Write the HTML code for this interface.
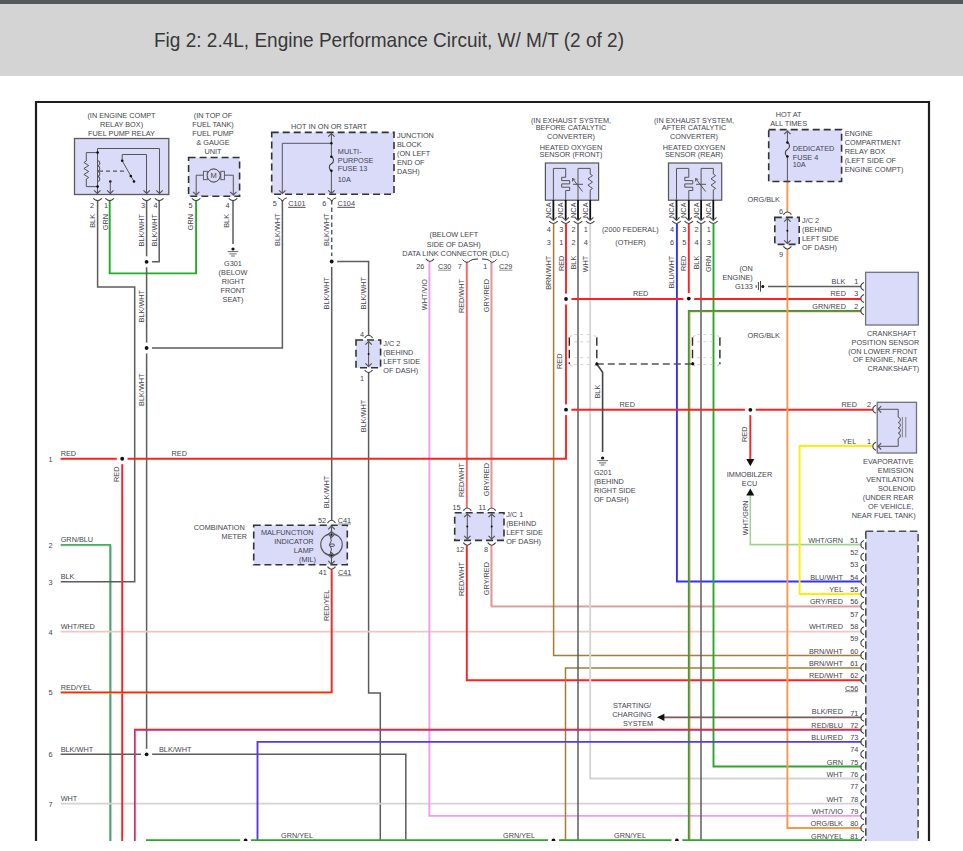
<!DOCTYPE html>
<html><head><meta charset="utf-8"><title>Fig 2</title>
<style>
html,body{margin:0;padding:0;background:#fff;}
body{width:963px;height:851px;position:relative;overflow:hidden;font-family:"Liberation Sans",sans-serif;}
#bar{position:absolute;left:0;top:0;width:963px;height:4px;background:#55585a;}
#hdr{position:absolute;left:0;top:4px;width:963px;height:72px;background:#d4d4d4;}
svg{position:absolute;left:0;top:0;}
text{font-family:"Liberation Sans",sans-serif;}
</style></head><body>
<div id="bar"></div><div id="hdr"></div>
<svg width="963" height="851" viewBox="0 0 963 851">
<text x="154" y="47" font-size="21" fill="#383838" textLength="470" lengthAdjust="spacingAndGlyphs">Fig 2: 2.4L, Engine Performance Circuit, W/ M/T (2 of 2)</text>
<defs><clipPath id="cp"><rect x="0" y="80" width="963" height="761"/></clipPath></defs>
<g clip-path="url(#cp)">
<line x1="36" y1="101" x2="36" y2="841" stroke="#1e1e1e" stroke-width="2.2"/>
<line x1="35" y1="102" x2="930" y2="102" stroke="#1e1e1e" stroke-width="2.2"/>
<line x1="929" y1="101" x2="929" y2="841" stroke="#1e1e1e" stroke-width="2.2"/>
<polyline points="60.7,544.9 110.2,544.9 110.2,841" fill="none" stroke="#4cb04c" stroke-width="1.9"/>
<line x1="60.7" y1="545.8" x2="110.2" y2="545.8" stroke="#7a9ad8" stroke-width="0.6"/>
<line x1="111" y1="545.5" x2="111" y2="841" stroke="#5a86d0" stroke-width="0.7"/>
<polyline points="97.6,200 97.6,287 134.7,287 134.7,581.8 60.7,581.8" fill="none" stroke="#5c5c5c" stroke-width="1.5"/>
<polyline points="109.7,200 109.7,273.4 196.1,273.4 196.1,200" fill="none" stroke="#26aa26" stroke-width="1.9"/>
<line x1="146.6" y1="200" x2="146.6" y2="754.3" stroke="#5c5c5c" stroke-width="1.5"/>
<polyline points="159.2,200 159.2,261.8 146.6,261.8" fill="none" stroke="#5c5c5c" stroke-width="1.5"/>
<line x1="233" y1="200" x2="233" y2="244" stroke="#5c5c5c" stroke-width="1.5"/>
<polyline points="282.4,200 282.4,348 146.6,348" fill="none" stroke="#5c5c5c" stroke-width="1.5"/>
<line x1="331.7" y1="200" x2="331.7" y2="261.5" stroke="#5c5c5c" stroke-width="1.5" stroke-dasharray="4.5 3"/>
<line x1="331.7" y1="261.5" x2="331.7" y2="520.2" stroke="#5c5c5c" stroke-width="1.5"/>
<polyline points="331.7,261.5 368.6,261.5 368.6,335.2" fill="none" stroke="#5c5c5c" stroke-width="1.5"/>
<polyline points="368.6,372.6 368.6,693 380.3,693 380.3,841" fill="none" stroke="#5c5c5c" stroke-width="1.5"/>
<line x1="60.7" y1="631.6" x2="861.5" y2="631.6" stroke="#f3c6c6" stroke-width="1.9"/>
<line x1="60.7" y1="803.6" x2="861.5" y2="803.6" stroke="#d4d4d4" stroke-width="1.9"/>
<polyline points="60.7,754.3 405.8,754.3 405.8,841" fill="none" stroke="#5c5c5c" stroke-width="1.5"/>
<polyline points="429.4,262 429.4,815.9 861.5,815.9" fill="none" stroke="#ef9cef" stroke-width="1.9"/>
<polyline points="466.8,262 466.8,508" fill="none" stroke="#ff6262" stroke-width="1.9"/>
<polyline points="466.8,545.2 466.8,680.2 861.5,680.2" fill="none" stroke="#ff2020" stroke-width="1.9"/>
<polyline points="491.7,262 491.7,508" fill="none" stroke="#f78e8e" stroke-width="1.6"/>
<line x1="490.6" y1="262" x2="490.6" y2="508" stroke="#a8acb4" stroke-width="0.6"/>
<polyline points="491.7,545.2 491.7,606.3 861.5,606.3" fill="none" stroke="#f78e8e" stroke-width="1.6"/>
<line x1="490.6" y1="545.2" x2="490.6" y2="606.3" stroke="#a8acb4" stroke-width="0.6"/>
<line x1="491" y1="607.1" x2="861.5" y2="607.1" stroke="#c8a8a8" stroke-width="0.7"/>
<polyline points="553.6,223.5 553.6,655.6 861.5,655.6" fill="none" stroke="#a47c34" stroke-width="1.5"/>
<polyline points="565.5,841 565.5,668 861.5,668" fill="none" stroke="#a47c34" stroke-width="1.5"/>
<line x1="578" y1="223.5" x2="578" y2="841" stroke="#5c5c5c" stroke-width="1.5"/>
<polyline points="590.2,223.5 590.2,778.5 861.5,778.5" fill="none" stroke="#d4d4d4" stroke-width="1.9"/>
<polyline points="676.9,223.5 676.9,581.5 861.5,581.5" fill="none" stroke="#3030ff" stroke-width="1.9"/>
<line x1="701" y1="223.5" x2="701" y2="841" stroke="#5c5c5c" stroke-width="1.5"/>
<polyline points="713.5,223.5 713.5,766.5 861.5,766.5" fill="none" stroke="#26aa26" stroke-width="1.9"/>
<polyline points="688.8,841 688.8,311 861,311" fill="none" stroke="#26aa26" stroke-width="1.9"/>
<line x1="689.95" y1="841" x2="689.95" y2="311.8" stroke="#ff5a4a" stroke-width="0.8"/>
<line x1="689.6" y1="311.8" x2="861" y2="311.8" stroke="#e86048" stroke-width="0.7"/>
<line x1="688.8" y1="223.5" x2="688.8" y2="298.6" stroke="#ff2020" stroke-width="1.9"/>
<polyline points="566,223.5 566,458.75 60.6,458.75" fill="none" stroke="#ff2020" stroke-width="1.9"/>
<line x1="122.2" y1="458.75" x2="122.2" y2="841" stroke="#ff2020" stroke-width="1.9"/>
<line x1="566" y1="299" x2="861" y2="299" stroke="#ff2020" stroke-width="1.9"/>
<line x1="768" y1="286.4" x2="861" y2="286.4" stroke="#5c5c5c" stroke-width="1.5"/>
<line x1="566" y1="409.8" x2="873" y2="409.8" stroke="#ff2020" stroke-width="1.9"/>
<line x1="750.3" y1="409.8" x2="750.3" y2="460" stroke="#ff2020" stroke-width="1.9"/>
<polyline points="750.3,494 750.3,544.6 861.5,544.6" fill="none" stroke="#a0d494" stroke-width="1.6"/>
<polyline points="787.4,181.5 787.4,212" fill="none" stroke="#f29a48" stroke-width="1.9"/>
<polyline points="787.4,249 787.4,828 861.5,828" fill="none" stroke="#f29a48" stroke-width="1.9"/>
<polyline points="873,446 799.6,446 799.6,594 861.5,594" fill="none" stroke="#ffee00" stroke-width="1.9"/>
<polyline points="60.7,692.4 331.7,692.4 331.7,569.3" fill="none" stroke="#ff2020" stroke-width="1.9"/>
<line x1="60.7" y1="693.5" x2="331" y2="693.5" stroke="#f0b020" stroke-width="0.6"/>
<polyline points="134.7,841 134.7,729.5 861.5,729.5" fill="none" stroke="#ff2020" stroke-width="1.5"/>
<line x1="135.6" y1="841" x2="135.6" y2="730.2" stroke="#6060ff" stroke-width="0.6"/>
<line x1="135.6" y1="730.6" x2="861.5" y2="730.6" stroke="#8a3cc8" stroke-width="0.8"/>
<polyline points="257.5,841 257.5,741.9 861.5,741.9" fill="none" stroke="#5a3ae0" stroke-width="1.9"/>
<line x1="664" y1="717.3" x2="861.5" y2="717.3" stroke="#5c5c5c" stroke-width="1.5"/>
<line x1="664" y1="718.1" x2="861.5" y2="718.1" stroke="#e06060" stroke-width="0.5"/>
<line x1="146" y1="840.3" x2="861.5" y2="840.3" stroke="#26aa26" stroke-width="1.9"/>
<line x1="596.8" y1="364" x2="692.8" y2="364" stroke="#555" stroke-width="1.7" stroke-dasharray="7 4"/>
<polyline points="596.8,364 602.6,372.3 602.6,452" fill="none" stroke="#444" stroke-width="1.6"/>
<rect x="74.5" y="138.5" width="94.3" height="56" fill="#dadaf9" stroke="#5a5a5a" stroke-width="1.3"/>
<polyline points="97.5,193.5 97.5,148.5 159.5,148.5 159.5,193.5" fill="none" stroke="#555" stroke-width="1.0"/>
<polyline points="97.6,152.6 86.3,152.6 86.3,161" fill="none" stroke="#555" stroke-width="1.0"/>
<path d="M86.3,161 l-2.4,1.5 l4.8,3 l-4.8,3 l4.8,3 l-4.8,3 l4.8,3 l-2.4,1.5 L86.3,186.6 L97.6,186.6" fill="none" stroke="#555" stroke-width="1.0"/>
<path d="M97.6,160.5 a2.7,2.7 0 0 1 0,5.3 a2.7,2.7 0 0 1 0,5.3 a2.7,2.7 0 0 1 0,5.3 a2.7,2.7 0 0 1 0,5.3" fill="none" stroke="#555" stroke-width="1.1"/>
<line x1="99" y1="171.2" x2="126.5" y2="171.2" stroke="#555" stroke-width="1.3" stroke-dasharray="4 3"/>
<polyline points="122.2,160.8 122.2,154.5 146.5,154.5 146.5,193.5" fill="none" stroke="#555" stroke-width="1.0"/>
<line x1="122.2" y1="160.8" x2="134" y2="181.5" stroke="#555" stroke-width="1.0"/>
<circle cx="97.6" cy="152.6" r="1.3" fill="#111"/>
<circle cx="97.6" cy="186.6" r="1.3" fill="#111"/>
<circle cx="122.2" cy="160.8" r="1.3" fill="#111"/>
<circle cx="130.8" cy="176.1" r="1.3" fill="#111"/>
<circle cx="134" cy="181.5" r="1.3" fill="#111"/>
<circle cx="110.3" cy="181.5" r="1.3" fill="#111"/>
<line x1="110.3" y1="181.5" x2="110.3" y2="193.5" stroke="#555" stroke-width="1.0"/>
<polyline points="94.1,190.3 97.3,193.5 100.5,190.3" fill="none" stroke="#555" stroke-width="1.15"/>
<polyline points="107.1,190.3 110.3,193.5 113.5,190.3" fill="none" stroke="#555" stroke-width="1.15"/>
<polyline points="143.5,190.3 146.7,193.5 149.9,190.3" fill="none" stroke="#555" stroke-width="1.15"/>
<polyline points="156.3,190.3 159.5,193.5 162.7,190.3" fill="none" stroke="#555" stroke-width="1.15"/>
<path d="M93.3,198.3 C95.23,200.4 96.31,200.6 97.6,200.6 C98.89,200.6 99.96,200.4 101.9,198.3" fill="none" stroke="#444" stroke-width="1.1"/>
<path d="M105.4,198.3 C107.34,200.4 108.41,200.6 109.7,200.6 C110.99,200.6 112.06,200.4 114,198.3" fill="none" stroke="#444" stroke-width="1.1"/>
<path d="M142.3,198.3 C144.23,200.4 145.31,200.6 146.6,200.6 C147.89,200.6 148.97,200.4 150.9,198.3" fill="none" stroke="#444" stroke-width="1.1"/>
<path d="M154.9,198.3 C156.83,200.4 157.91,200.6 159.2,200.6 C160.49,200.6 161.56,200.4 163.5,198.3" fill="none" stroke="#444" stroke-width="1.1"/>
<text x="121.5" y="118" font-size="7.3" text-anchor="middle" fill="#454550">(IN ENGINE COMPT</text>
<text x="121.5" y="126.9" font-size="7.3" text-anchor="middle" fill="#454550">RELAY BOX)</text>
<text x="121.5" y="135.8" font-size="7.3" text-anchor="middle" fill="#454550">FUEL PUMP RELAY</text>
<text x="94" y="208" font-size="7.3" text-anchor="end" fill="#454550">2</text>
<text x="108" y="208" font-size="7.3" text-anchor="end" fill="#454550">1</text>
<text x="145" y="208" font-size="7.3" text-anchor="end" fill="#454550">3</text>
<text x="157.5" y="208" font-size="7.3" text-anchor="end" fill="#454550">4</text>
<text transform="translate(95.3,214) rotate(-90)" font-size="7.3" text-anchor="end" fill="#454550">BLK</text>
<text transform="translate(107.5,214) rotate(-90)" font-size="7.3" text-anchor="end" fill="#454550">GRN</text>
<text transform="translate(144.3,214) rotate(-90)" font-size="7.3" text-anchor="end" fill="#454550">BLK/WHT</text>
<text transform="translate(156.8,214) rotate(-90)" font-size="7.3" text-anchor="end" fill="#454550">BLK/WHT</text>
<rect x="188.6" y="157.5" width="51" height="38.7" fill="#dadaf9" stroke="#333" stroke-width="1.6" stroke-dasharray="7 4"/>
<circle cx="213.7" cy="175.5" r="6.5" fill="#dadaf9" stroke="#555" stroke-width="1"/>
<rect x="203.4" y="171.3" width="3.9" height="8.4" fill="#dadaf9" stroke="#555" stroke-width="0.9"/>
<rect x="220.8" y="171.3" width="3.6" height="8.4" fill="#dadaf9" stroke="#555" stroke-width="0.9"/>
<circle cx="213.7" cy="175.5" r="6.5" fill="#dadaf9" stroke="#555" stroke-width="1"/>
<text x="213.7" y="178.2" font-size="7.5" text-anchor="middle" fill="#454550">M</text>
<polyline points="203.4,175.2 196.2,175.2 196.2,195" fill="none" stroke="#555" stroke-width="1.0"/>
<polyline points="224.4,175.2 233.3,175.2 233.3,195" fill="none" stroke="#555" stroke-width="1.0"/>
<polyline points="193,191.8 196.2,195 199.4,191.8" fill="none" stroke="#555" stroke-width="1.15"/>
<polyline points="230.1,191.8 233.3,195 236.5,191.8" fill="none" stroke="#555" stroke-width="1.15"/>
<path d="M191.8,198.3 C193.73,200.4 194.81,200.6 196.1,200.6 C197.39,200.6 198.47,200.4 200.4,198.3" fill="none" stroke="#444" stroke-width="1.1"/>
<path d="M228.7,198.3 C230.63,200.4 231.71,200.6 233,200.6 C234.29,200.6 235.37,200.4 237.3,198.3" fill="none" stroke="#444" stroke-width="1.1"/>
<text x="213" y="117.5" font-size="7.3" text-anchor="middle" fill="#454550">(IN TOP OF</text>
<text x="213" y="126.5" font-size="7.3" text-anchor="middle" fill="#454550">FUEL TANK)</text>
<text x="213" y="135.5" font-size="7.3" text-anchor="middle" fill="#454550">FUEL PUMP</text>
<text x="213" y="144.5" font-size="7.3" text-anchor="middle" fill="#454550">&amp; GAUGE</text>
<text x="213" y="153.5" font-size="7.3" text-anchor="middle" fill="#454550">UNIT</text>
<text x="192.5" y="208" font-size="7.3" text-anchor="end" fill="#454550">5</text>
<text x="229.5" y="208" font-size="7.3" text-anchor="end" fill="#454550">4</text>
<text transform="translate(192.5,214) rotate(-90)" font-size="7.3" text-anchor="end" fill="#454550">GRN</text>
<text transform="translate(229,214) rotate(-90)" font-size="7.3" text-anchor="end" fill="#454550">BLK</text>
<circle cx="233" cy="249" r="1.6" fill="#111"/>
<line x1="227.7" y1="251.6" x2="238.3" y2="251.6" stroke="#666" stroke-width="1.0"/>
<line x1="229.4" y1="253.9" x2="236.6" y2="253.9" stroke="#666" stroke-width="1.0"/>
<line x1="231.2" y1="256" x2="234.8" y2="256" stroke="#666" stroke-width="1.0"/>
<text x="233" y="266" font-size="7.3" text-anchor="middle" fill="#454550">G301</text>
<text x="233" y="274.9" font-size="7.3" text-anchor="middle" fill="#454550">(BELOW</text>
<text x="233" y="283.8" font-size="7.3" text-anchor="middle" fill="#454550">RIGHT</text>
<text x="233" y="292.7" font-size="7.3" text-anchor="middle" fill="#454550">FRONT</text>
<text x="233" y="301.6" font-size="7.3" text-anchor="middle" fill="#454550">SEAT)</text>
<rect x="271.7" y="132.4" width="122.3" height="61.8" fill="#dadaf9" stroke="#333" stroke-width="1.6" stroke-dasharray="7 4"/>
<line x1="331.4" y1="133" x2="331.4" y2="194" stroke="#555" stroke-width="1.0"/>
<polyline points="328.2,136.7 331.4,133.5 334.6,136.7" fill="none" stroke="#555" stroke-width="1.15"/>
<polyline points="328.2,190.3 331.4,193.5 334.6,190.3" fill="none" stroke="#555" stroke-width="1.15"/>
<polyline points="331.4,143.3 282.3,143.3 282.3,193.5" fill="none" stroke="#555" stroke-width="1.0"/>
<polyline points="279.1,190.3 282.3,193.5 285.5,190.3" fill="none" stroke="#555" stroke-width="1.15"/>
<rect x="329" y="157.5" width="5" height="12.6" fill="#dadaf9"/>
<path d="M331.4,156.8 c2.8,1.2 2.8,5.8 0,7 c-2.8,1.2 -2.8,5.8 0,7" fill="none" stroke="#444" stroke-width="1.1"/>
<circle cx="331.4" cy="143.3" r="1.2" fill="#111"/>
<circle cx="331.4" cy="156.8" r="1.3" fill="#111"/>
<circle cx="331.4" cy="170.8" r="1.3" fill="#111"/>
<text x="329" y="128.6" font-size="7.3" text-anchor="middle" fill="#454550">HOT IN ON OR START</text>
<text x="337.8" y="154" font-size="7.3" fill="#454550">MULTI-</text>
<text x="337.8" y="162.7" font-size="7.3" fill="#454550">PURPOSE</text>
<text x="337.8" y="171.4" font-size="7.3" fill="#454550">FUSE 13</text>
<text x="337.8" y="181.6" font-size="7.3" fill="#454550">10A</text>
<text x="397" y="137.8" font-size="7.3" fill="#454550">JUNCTION</text>
<text x="397" y="146.8" font-size="7.3" fill="#454550">BLOCK</text>
<text x="397" y="155.8" font-size="7.3" fill="#454550">(ON LEFT</text>
<text x="397" y="164.8" font-size="7.3" fill="#454550">END OF</text>
<text x="397" y="173.8" font-size="7.3" fill="#454550">DASH)</text>
<path d="M277.9,197.8 Q281.4,198.5 282.4,201.5 Q283.4,198.5 286.9,197.8" fill="none" stroke="#444" stroke-width="1.0"/>
<path d="M327.2,197.8 Q330.7,198.5 331.7,201.5 Q332.7,198.5 336.2,197.8" fill="none" stroke="#444" stroke-width="1.0"/>
<text x="276.8" y="206" font-size="7.3" text-anchor="end" fill="#454550">5</text>
<text x="326.3" y="206" font-size="7.3" text-anchor="end" fill="#454550">6</text>
<text x="288.2" y="206" font-size="7.3" fill="#454550" text-decoration="underline">C101</text>
<text x="337.5" y="206" font-size="7.3" fill="#454550" text-decoration="underline">C104</text>
<line x1="288.2" y1="207.2" x2="305.2" y2="207.2" stroke="#666" stroke-width="0.7"/>
<line x1="337.5" y1="207.2" x2="354.6" y2="207.2" stroke="#666" stroke-width="0.7"/>
<text transform="translate(279.5,213.5) rotate(-90)" font-size="7.3" text-anchor="end" fill="#454550">BLK/WHT</text>
<text transform="translate(328.8,213.5) rotate(-90)" font-size="7.3" text-anchor="end" fill="#454550">BLK/WHT</text>
<text transform="translate(329,277) rotate(-90)" font-size="7.3" text-anchor="end" fill="#454550">BLK/WHT</text>
<text transform="translate(366,277) rotate(-90)" font-size="7.3" text-anchor="end" fill="#454550">BLK/WHT</text>
<text transform="translate(144.3,290) rotate(-90)" font-size="7.3" text-anchor="end" fill="#454550">BLK/WHT</text>
<text transform="translate(144.3,373.5) rotate(-90)" font-size="7.3" text-anchor="end" fill="#454550">BLK/WHT</text>
<text transform="translate(366,399.7) rotate(-90)" font-size="7.3" text-anchor="end" fill="#454550">BLK/WHT</text>
<text transform="translate(329,475.7) rotate(-90)" font-size="7.3" text-anchor="end" fill="#454550">BLK/WHT</text>
<rect x="356" y="340" width="24.6" height="27.8" fill="#dadaf9" stroke="#333" stroke-width="1.6" stroke-dasharray="7 4"/>
<line x1="368.6" y1="341" x2="368.6" y2="367" stroke="#555" stroke-width="1.0"/>
<polyline points="365.4,344.7 368.6,341.5 371.8,344.7" fill="none" stroke="#555" stroke-width="1.15"/>
<polyline points="365.4,363.3 368.6,366.5 371.8,363.3" fill="none" stroke="#555" stroke-width="1.15"/>
<circle cx="368.6" cy="354" r="1.0" fill="#111"/>
<path d="M364.6,337.8 C366.4,335.4 367.4,335.2 368.6,335.2 C369.8,335.2 370.8,335.4 372.6,337.8" fill="none" stroke="#444" stroke-width="1.1"/>
<path d="M364.6,370 C366.4,372.4 367.4,372.6 368.6,372.6 C369.8,372.6 370.8,372.4 372.6,370" fill="none" stroke="#444" stroke-width="1.1"/>
<text x="364" y="336.5" font-size="7.3" text-anchor="end" fill="#454550">4</text>
<text x="364" y="380.5" font-size="7.3" text-anchor="end" fill="#454550">1</text>
<text x="383.3" y="346.2" font-size="7.3" fill="#454550">J/C 2</text>
<text x="383.3" y="355.2" font-size="7.3" fill="#454550">(BEHIND</text>
<text x="383.3" y="364.2" font-size="7.3" fill="#454550">LEFT SIDE</text>
<text x="383.3" y="373.2" font-size="7.3" fill="#454550">OF DASH)</text>
<text x="453.8" y="236.8" font-size="7.3" text-anchor="middle" fill="#454550">(BELOW LEFT</text>
<text x="453.8" y="246.8" font-size="7.3" text-anchor="middle" fill="#454550">SIDE OF DASH)</text>
<text x="509" y="255.5" font-size="7.3" text-anchor="end" fill="#454550">DATA LINK CONNECTOR (DLC)</text>
<path d="M426,258.9 C427.8,261.3 428.8,261.5 430,261.5 C431.2,261.5 432.2,261.3 434,258.9" fill="none" stroke="#444" stroke-width="1.1"/>
<path d="M462.5,259.5 Q466.7,264.5 470.5,260.5 Q472,259 478,259" fill="none" stroke="#333" stroke-width="1.0"/>
<path d="M482,259 Q488,259 489.5,260.5 Q492.2,264.5 496.5,259.5" fill="none" stroke="#333" stroke-width="1.0"/>
<text x="424.3" y="269" font-size="7.3" text-anchor="end" fill="#454550">26</text>
<text x="461.7" y="269" font-size="7.3" text-anchor="end" fill="#454550">7</text>
<text x="487.3" y="269" font-size="7.3" text-anchor="end" fill="#454550">1</text>
<text x="438" y="269" font-size="7.3" fill="#454550">C30</text>
<text x="499" y="269" font-size="7.3" fill="#454550">C29</text>
<line x1="438" y1="270.2" x2="451" y2="270.2" stroke="#666" stroke-width="0.7"/>
<line x1="499" y1="270.2" x2="512.4" y2="270.2" stroke="#666" stroke-width="0.7"/>
<text transform="translate(426.5,279) rotate(-90)" font-size="7.3" text-anchor="end" fill="#454550">WHT/VIO</text>
<text transform="translate(464,279) rotate(-90)" font-size="7.3" text-anchor="end" fill="#454550">RED/WHT</text>
<text transform="translate(489,279) rotate(-90)" font-size="7.3" text-anchor="end" fill="#454550">GRY/RED</text>
<text transform="translate(464,463) rotate(-90)" font-size="7.3" text-anchor="end" fill="#454550">RED/WHT</text>
<text transform="translate(489,463) rotate(-90)" font-size="7.3" text-anchor="end" fill="#454550">GRY/RED</text>
<rect x="454.7" y="512.7" width="49.3" height="27.7" fill="#dadaf9" stroke="#333" stroke-width="1.6" stroke-dasharray="7 4"/>
<line x1="467.3" y1="513.5" x2="467.3" y2="539.5" stroke="#555" stroke-width="1.0"/>
<polyline points="464.1,517.2 467.3,514 470.5,517.2" fill="none" stroke="#555" stroke-width="1.15"/>
<polyline points="464.1,535.8 467.3,539 470.5,535.8" fill="none" stroke="#555" stroke-width="1.15"/>
<circle cx="467.3" cy="526.5" r="1.0" fill="#111"/>
<path d="M463.3,510.6 C465.1,508.2 466.1,508 467.3,508 C468.5,508 469.5,508.2 471.3,510.6" fill="none" stroke="#444" stroke-width="1.1"/>
<path d="M463.3,542.6 C465.1,545 466.1,545.2 467.3,545.2 C468.5,545.2 469.5,545 471.3,542.6" fill="none" stroke="#444" stroke-width="1.1"/>
<line x1="491.7" y1="513.5" x2="491.7" y2="539.5" stroke="#555" stroke-width="1.0"/>
<polyline points="488.5,517.2 491.7,514 494.9,517.2" fill="none" stroke="#555" stroke-width="1.15"/>
<polyline points="488.5,535.8 491.7,539 494.9,535.8" fill="none" stroke="#555" stroke-width="1.15"/>
<circle cx="491.7" cy="526.5" r="1.0" fill="#111"/>
<path d="M487.7,510.6 C489.5,508.2 490.5,508 491.7,508 C492.9,508 493.9,508.2 495.7,510.6" fill="none" stroke="#444" stroke-width="1.1"/>
<path d="M487.7,542.6 C489.5,545 490.5,545.2 491.7,545.2 C492.9,545.2 493.9,545 495.7,542.6" fill="none" stroke="#444" stroke-width="1.1"/>
<text x="460.7" y="509.5" font-size="7.3" text-anchor="end" fill="#454550">15</text>
<text x="486" y="509.5" font-size="7.3" text-anchor="end" fill="#454550">11</text>
<text x="464" y="551.5" font-size="7.3" text-anchor="end" fill="#454550">12</text>
<text x="488" y="551.5" font-size="7.3" text-anchor="end" fill="#454550">8</text>
<text x="506.2" y="517.3" font-size="7.3" fill="#454550">J/C 1</text>
<text x="506.2" y="526.3" font-size="7.3" fill="#454550">(BEHIND</text>
<text x="506.2" y="535.3" font-size="7.3" fill="#454550">LEFT SIDE</text>
<text x="506.2" y="544.3" font-size="7.3" fill="#454550">OF DASH)</text>
<text transform="translate(464,562) rotate(-90)" font-size="7.3" text-anchor="end" fill="#454550">RED/WHT</text>
<text transform="translate(489,562) rotate(-90)" font-size="7.3" text-anchor="end" fill="#454550">GRY/RED</text>
<rect x="253.7" y="525.2" width="93.6" height="39.5" fill="#dadaf9" stroke="#333" stroke-width="1.6" stroke-dasharray="7 4"/>
<circle cx="331.5" cy="544.6" r="10.8" fill="none" stroke="#555" stroke-width="1.1"/>
<line x1="331.5" y1="525.8" x2="331.5" y2="535" stroke="#555" stroke-width="1.1"/>
<line x1="331.5" y1="555" x2="331.5" y2="564.5" stroke="#555" stroke-width="1.1"/>
<polyline points="328.2,529.3 331.5,526 334.8,529.3" fill="none" stroke="#555" stroke-width="1.15"/>
<polyline points="328.2,560.9 331.5,564.2 334.8,560.9" fill="none" stroke="#555" stroke-width="1.15"/>
<polyline points="326.5,535.6 331.5,531.4 336.5,535.6" fill="none" stroke="#555" stroke-width="1.1"/>
<polyline points="326.5,553.6 331.5,557.8 336.5,553.6" fill="none" stroke="#555" stroke-width="1.1"/>
<polyline points="328.9,534.9 331.5,537.5 334.1,534.9" fill="none" stroke="#555" stroke-width="1.15"/>
<polyline points="328.9,555.1 331.5,552.5 334.1,555.1" fill="none" stroke="#555" stroke-width="1.15"/>
<circle cx="331.5" cy="535" r="1.1" fill="#111"/>
<circle cx="331.5" cy="555.2" r="1.1" fill="#111"/>
<path d="M331.5,535 q-1.8,2 -0.6,4 q1.2,2 -0.8,4 q-1.2,2 0.4,4 q1.8,2 0.4,4 q-1.2,2 0.6,4" fill="none" stroke="#555" stroke-width="1.0"/>
<ellipse cx="332" cy="545.2" rx="2.6" ry="1.3" fill="none" stroke="#555" stroke-width="1"/>
<path d="M327.5,522.8 C329.3,520.4 330.3,520.2 331.5,520.2 C332.7,520.2 333.7,520.4 335.5,522.8" fill="none" stroke="#444" stroke-width="1.1"/>
<path d="M327.5,566.7 C329.3,569.1 330.3,569.3 331.5,569.3 C332.7,569.3 333.7,569.1 335.5,566.7" fill="none" stroke="#444" stroke-width="1.1"/>
<text x="313.6" y="534.6" font-size="7.3" text-anchor="end" fill="#454550">MALFUNCTION</text>
<text x="313.6" y="543.6" font-size="7.3" text-anchor="end" fill="#454550">INDICATOR</text>
<text x="313.6" y="552.6" font-size="7.3" text-anchor="end" fill="#454550">LAMP</text>
<text x="316" y="561.5" font-size="7.3" text-anchor="end" fill="#454550">(MIL)</text>
<text x="244.8" y="530" font-size="7.3" text-anchor="end" fill="#454550">COMBINATION</text>
<text x="247.1" y="539" font-size="7.3" text-anchor="end" fill="#454550">METER</text>
<text x="326" y="522.8" font-size="7.3" text-anchor="end" fill="#454550">52</text>
<text x="337.7" y="522.8" font-size="7.3" fill="#454550">C41</text>
<line x1="337.7" y1="524" x2="351" y2="524" stroke="#666" stroke-width="0.7"/>
<text x="326.8" y="574.5" font-size="7.3" text-anchor="end" fill="#454550">41</text>
<text x="338" y="574.5" font-size="7.3" fill="#454550">C41</text>
<line x1="338" y1="575.7" x2="351.3" y2="575.7" stroke="#666" stroke-width="0.7"/>
<text transform="translate(329,589.7) rotate(-90)" font-size="7.3" text-anchor="end" fill="#454550">RED/YEL</text>
<rect x="545.4" y="163" width="53.2" height="37.2" fill="#dadaf9" stroke="#555" stroke-width="1.2"/>
<polyline points="553.4,200 553.4,168.4 565.7,168.4 565.7,177.3" fill="none" stroke="#555" stroke-width="1.0"/>
<path d="M565.7,177.3 h-4 v3.3 h8 v3.3 h-8 v3.3 h8 v3.3 h-4 V200" fill="none" stroke="#555" stroke-width="1.0"/>
<polyline points="578,200 578,168.4 590.2,168.4 590.2,174" fill="none" stroke="#555" stroke-width="1.0"/>
<path d="M590.2,174 l2.3,1.6 l-4.6,3.2 l4.6,3.2 l-4.6,3.2 l4.6,3.2 l-2.3,1.6 V200" fill="none" stroke="#555" stroke-width="1.0"/>
<line x1="573" y1="184.3" x2="583" y2="184.3" stroke="#555" stroke-width="1.0"/>
<line x1="572.5" y1="178.5" x2="582.5" y2="191.5" stroke="#555" stroke-width="1.0"/>
<polyline points="572.5,181.5 572.5,178.5 575.2,179.5" fill="none" stroke="#555" stroke-width="0.9"/>
<line x1="553.4" y1="200" x2="553.4" y2="220" stroke="#111" stroke-width="1.8"/>
<polyline points="550.2,217.3 553.4,220.5 556.6,217.3" fill="none" stroke="#555" stroke-width="1.15"/>
<path d="M549.1,221.2 C551.03,223.3 552.11,223.5 553.4,223.5 C554.69,223.5 555.76,223.3 557.7,221.2" fill="none" stroke="#444" stroke-width="1.1"/>
<text transform="translate(550.9,202.5) rotate(-90)" font-size="7.3" text-anchor="end" fill="#454550">NCA</text>
<text x="550.9" y="231.5" font-size="7.3" text-anchor="end" fill="#454550">4</text>
<text x="550.9" y="244.9" font-size="7.3" text-anchor="end" fill="#454550">3</text>
<line x1="565.7" y1="200" x2="565.7" y2="220" stroke="#111" stroke-width="1.8"/>
<polyline points="562.5,217.3 565.7,220.5 568.9,217.3" fill="none" stroke="#555" stroke-width="1.15"/>
<path d="M561.4,221.2 C563.33,223.3 564.41,223.5 565.7,223.5 C566.99,223.5 568.06,223.3 570,221.2" fill="none" stroke="#444" stroke-width="1.1"/>
<text transform="translate(563.2,202.5) rotate(-90)" font-size="7.3" text-anchor="end" fill="#454550">NCA</text>
<text x="563.2" y="231.5" font-size="7.3" text-anchor="end" fill="#454550">3</text>
<text x="563.2" y="244.9" font-size="7.3" text-anchor="end" fill="#454550">1</text>
<line x1="578" y1="200" x2="578" y2="220" stroke="#111" stroke-width="1.8"/>
<polyline points="574.8,217.3 578,220.5 581.2,217.3" fill="none" stroke="#555" stroke-width="1.15"/>
<path d="M573.7,221.2 C575.63,223.3 576.71,223.5 578,223.5 C579.29,223.5 580.37,223.3 582.3,221.2" fill="none" stroke="#444" stroke-width="1.1"/>
<text transform="translate(575.5,202.5) rotate(-90)" font-size="7.3" text-anchor="end" fill="#454550">NCA</text>
<text x="575.5" y="231.5" font-size="7.3" text-anchor="end" fill="#454550">2</text>
<text x="575.5" y="244.9" font-size="7.3" text-anchor="end" fill="#454550">2</text>
<line x1="590.2" y1="200" x2="590.2" y2="220" stroke="#111" stroke-width="1.8"/>
<polyline points="587,217.3 590.2,220.5 593.4,217.3" fill="none" stroke="#555" stroke-width="1.15"/>
<path d="M585.9,221.2 C587.83,223.3 588.91,223.5 590.2,223.5 C591.49,223.5 592.56,223.3 594.5,221.2" fill="none" stroke="#444" stroke-width="1.1"/>
<text transform="translate(587.7,202.5) rotate(-90)" font-size="7.3" text-anchor="end" fill="#454550">NCA</text>
<text x="587.7" y="231.5" font-size="7.3" text-anchor="end" fill="#454550">1</text>
<text x="587.7" y="244.9" font-size="7.3" text-anchor="end" fill="#454550">4</text>
<rect x="668.5" y="163" width="53.2" height="37.2" fill="#dadaf9" stroke="#555" stroke-width="1.2"/>
<polyline points="676.5,200 676.5,168.4 688.8,168.4 688.8,177.3" fill="none" stroke="#555" stroke-width="1.0"/>
<path d="M688.8,177.3 h-4 v3.3 h8 v3.3 h-8 v3.3 h8 v3.3 h-4 V200" fill="none" stroke="#555" stroke-width="1.0"/>
<polyline points="701.1,200 701.1,168.4 713.3,168.4 713.3,174" fill="none" stroke="#555" stroke-width="1.0"/>
<path d="M713.3,174 l2.3,1.6 l-4.6,3.2 l4.6,3.2 l-4.6,3.2 l4.6,3.2 l-2.3,1.6 V200" fill="none" stroke="#555" stroke-width="1.0"/>
<line x1="696.1" y1="184.3" x2="706.1" y2="184.3" stroke="#555" stroke-width="1.0"/>
<line x1="695.6" y1="178.5" x2="705.6" y2="191.5" stroke="#555" stroke-width="1.0"/>
<polyline points="695.6,181.5 695.6,178.5 698.3,179.5" fill="none" stroke="#555" stroke-width="0.9"/>
<line x1="676.5" y1="200" x2="676.5" y2="220" stroke="#111" stroke-width="1.8"/>
<polyline points="673.3,217.3 676.5,220.5 679.7,217.3" fill="none" stroke="#555" stroke-width="1.15"/>
<path d="M672.2,221.2 C674.13,223.3 675.21,223.5 676.5,223.5 C677.79,223.5 678.87,223.3 680.8,221.2" fill="none" stroke="#444" stroke-width="1.1"/>
<text transform="translate(674,202.5) rotate(-90)" font-size="7.3" text-anchor="end" fill="#454550">NCA</text>
<text x="674" y="231.5" font-size="7.3" text-anchor="end" fill="#454550">4</text>
<text x="674" y="244.9" font-size="7.3" text-anchor="end" fill="#454550">6</text>
<line x1="688.8" y1="200" x2="688.8" y2="220" stroke="#111" stroke-width="1.8"/>
<polyline points="685.6,217.3 688.8,220.5 692,217.3" fill="none" stroke="#555" stroke-width="1.15"/>
<path d="M684.5,221.2 C686.43,223.3 687.51,223.5 688.8,223.5 C690.09,223.5 691.16,223.3 693.1,221.2" fill="none" stroke="#444" stroke-width="1.1"/>
<text transform="translate(686.3,202.5) rotate(-90)" font-size="7.3" text-anchor="end" fill="#454550">NCA</text>
<text x="686.3" y="231.5" font-size="7.3" text-anchor="end" fill="#454550">3</text>
<text x="686.3" y="244.9" font-size="7.3" text-anchor="end" fill="#454550">5</text>
<line x1="701.1" y1="200" x2="701.1" y2="220" stroke="#111" stroke-width="1.8"/>
<polyline points="697.9,217.3 701.1,220.5 704.3,217.3" fill="none" stroke="#555" stroke-width="1.15"/>
<path d="M696.8,221.2 C698.74,223.3 699.81,223.5 701.1,223.5 C702.39,223.5 703.47,223.3 705.4,221.2" fill="none" stroke="#444" stroke-width="1.1"/>
<text transform="translate(698.6,202.5) rotate(-90)" font-size="7.3" text-anchor="end" fill="#454550">NCA</text>
<text x="698.6" y="231.5" font-size="7.3" text-anchor="end" fill="#454550">2</text>
<text x="698.6" y="244.9" font-size="7.3" text-anchor="end" fill="#454550">4</text>
<line x1="713.3" y1="200" x2="713.3" y2="220" stroke="#111" stroke-width="1.8"/>
<polyline points="710.1,217.3 713.3,220.5 716.5,217.3" fill="none" stroke="#555" stroke-width="1.15"/>
<path d="M709,221.2 C710.93,223.3 712.01,223.5 713.3,223.5 C714.59,223.5 715.66,223.3 717.6,221.2" fill="none" stroke="#444" stroke-width="1.1"/>
<text transform="translate(710.8,202.5) rotate(-90)" font-size="7.3" text-anchor="end" fill="#454550">NCA</text>
<text x="710.8" y="231.5" font-size="7.3" text-anchor="end" fill="#454550">1</text>
<text x="710.8" y="244.9" font-size="7.3" text-anchor="end" fill="#454550">3</text>
<text x="571" y="123" font-size="7.3" text-anchor="middle" fill="#454550">(IN EXHAUST SYSTEM,</text>
<text x="571" y="130" font-size="7.3" text-anchor="middle" fill="#454550">BEFORE CATALYTIC</text>
<text x="571" y="138.8" font-size="7.3" text-anchor="middle" fill="#454550">CONVERTER)</text>
<text x="571" y="150.2" font-size="7.3" text-anchor="middle" fill="#454550">HEATED OXYGEN</text>
<text x="571" y="157.2" font-size="7.3" text-anchor="middle" fill="#454550">SENSOR (FRONT)</text>
<text x="694" y="123" font-size="7.3" text-anchor="middle" fill="#454550">(IN EXHAUST SYSTEM,</text>
<text x="694" y="130" font-size="7.3" text-anchor="middle" fill="#454550">AFTER CATALYTIC</text>
<text x="694" y="138.8" font-size="7.3" text-anchor="middle" fill="#454550">CONVERTER)</text>
<text x="694" y="150.2" font-size="7.3" text-anchor="middle" fill="#454550">HEATED OXYGEN</text>
<text x="694" y="157.2" font-size="7.3" text-anchor="middle" fill="#454550">SENSOR (REAR)</text>
<text x="630.3" y="232" font-size="7.3" text-anchor="middle" fill="#454550">(2000 FEDERAL)</text>
<text x="630.5" y="244.9" font-size="7.3" text-anchor="middle" fill="#454550">(OTHER)</text>
<text transform="translate(551,255.7) rotate(-90)" font-size="7.3" text-anchor="end" fill="#454550">BRN/WHT</text>
<text transform="translate(563.5,255.7) rotate(-90)" font-size="7.3" text-anchor="end" fill="#454550">RED</text>
<text transform="translate(575.5,255.7) rotate(-90)" font-size="7.3" text-anchor="end" fill="#454550">BLK</text>
<text transform="translate(587.7,255.7) rotate(-90)" font-size="7.3" text-anchor="end" fill="#454550">WHT</text>
<text transform="translate(674.4,255.7) rotate(-90)" font-size="7.3" text-anchor="end" fill="#454550">BLU/WHT</text>
<text transform="translate(686.3,255.7) rotate(-90)" font-size="7.3" text-anchor="end" fill="#454550">RED</text>
<text transform="translate(698.5,255.7) rotate(-90)" font-size="7.3" text-anchor="end" fill="#454550">BLK</text>
<text transform="translate(711,255.7) rotate(-90)" font-size="7.3" text-anchor="end" fill="#454550">GRN</text>
<text transform="translate(561.5,353.6) rotate(-90)" font-size="7.3" text-anchor="end" fill="#454550">RED</text>
<text transform="translate(599.5,384.7) rotate(-90)" font-size="7.3" text-anchor="end" fill="#454550">BLK</text>
<text x="640.7" y="296.2" font-size="7.3" text-anchor="middle" fill="#454550">RED</text>
<text x="627.3" y="407.2" font-size="7.3" text-anchor="middle" fill="#454550">RED</text>
<line x1="573.8" y1="334.6" x2="592.3" y2="334.6" stroke="#cfcfcf" stroke-width="0.9" stroke-dasharray="3 3.5"/>
<line x1="573.8" y1="341.8" x2="592.3" y2="341.8" stroke="#cfcfcf" stroke-width="0.9" stroke-dasharray="3 3.5"/>
<line x1="573.8" y1="357.7" x2="592.3" y2="357.7" stroke="#cfcfcf" stroke-width="0.9" stroke-dasharray="3 3.5"/>
<line x1="573.8" y1="364.6" x2="592.3" y2="364.6" stroke="#cfcfcf" stroke-width="0.9" stroke-dasharray="3 3.5"/>
<line x1="569.3" y1="337.2" x2="569.3" y2="364.3" stroke="#2a2a2a" stroke-width="1.4" stroke-dasharray="8.5 4"/>
<line x1="596.8" y1="337.2" x2="596.8" y2="364.3" stroke="#2a2a2a" stroke-width="1.4" stroke-dasharray="8.5 4"/>
<path d="M569.6,337.7 q0.5,-1.8 2.5,-2.2" fill="none" stroke="#bbb" stroke-width="0.9"/>
<path d="M596.5,337.7 q-0.5,-1.8 -2.5,-2.2" fill="none" stroke="#bbb" stroke-width="0.9"/>
<path d="M569.6,363.8 q0.5,1.8 2.5,2.2" fill="none" stroke="#bbb" stroke-width="0.9"/>
<path d="M596.5,363.8 q-0.5,1.8 -2.5,2.2" fill="none" stroke="#bbb" stroke-width="0.9"/>
<line x1="697" y1="334.6" x2="715.4" y2="334.6" stroke="#cfcfcf" stroke-width="0.9" stroke-dasharray="3 3.5"/>
<line x1="697" y1="341.8" x2="715.4" y2="341.8" stroke="#cfcfcf" stroke-width="0.9" stroke-dasharray="3 3.5"/>
<line x1="697" y1="357.7" x2="715.4" y2="357.7" stroke="#cfcfcf" stroke-width="0.9" stroke-dasharray="3 3.5"/>
<line x1="697" y1="364.6" x2="715.4" y2="364.6" stroke="#cfcfcf" stroke-width="0.9" stroke-dasharray="3 3.5"/>
<line x1="692.5" y1="337.2" x2="692.5" y2="364.3" stroke="#2a2a2a" stroke-width="1.4" stroke-dasharray="8.5 4"/>
<line x1="719.9" y1="337.2" x2="719.9" y2="364.3" stroke="#2a2a2a" stroke-width="1.4" stroke-dasharray="8.5 4"/>
<path d="M692.8,337.7 q0.5,-1.8 2.5,-2.2" fill="none" stroke="#bbb" stroke-width="0.9"/>
<path d="M719.6,337.7 q-0.5,-1.8 -2.5,-2.2" fill="none" stroke="#bbb" stroke-width="0.9"/>
<path d="M692.8,363.8 q0.5,1.8 2.5,2.2" fill="none" stroke="#bbb" stroke-width="0.9"/>
<path d="M719.6,363.8 q-0.5,1.8 -2.5,2.2" fill="none" stroke="#bbb" stroke-width="0.9"/>
<circle cx="596.8" cy="364" r="1.6" fill="#111"/>
<circle cx="692.8" cy="363.8" r="1.6" fill="#111"/>
<circle cx="602.6" cy="458" r="1.6" fill="#111"/>
<line x1="597.3" y1="460.6" x2="607.9" y2="460.6" stroke="#666" stroke-width="1.0"/>
<line x1="599" y1="462.9" x2="606.2" y2="462.9" stroke="#666" stroke-width="1.0"/>
<line x1="600.8" y1="465" x2="604.4" y2="465" stroke="#666" stroke-width="1.0"/>
<text x="593.9" y="475" font-size="7.3" fill="#454550">G201</text>
<text x="593.9" y="483.9" font-size="7.3" fill="#454550">(BEHIND</text>
<text x="593.9" y="492.8" font-size="7.3" fill="#454550">RIGHT SIDE</text>
<text x="593.9" y="501.7" font-size="7.3" fill="#454550">OF DASH)</text>
<rect x="768.7" y="129.6" width="72.9" height="51.9" fill="#dadaf9" stroke="#333" stroke-width="1.6" stroke-dasharray="7 4"/>
<line x1="787.4" y1="130.5" x2="787.4" y2="181.5" stroke="#555" stroke-width="1.0"/>
<polyline points="784.2,134.2 787.4,131 790.6,134.2" fill="none" stroke="#555" stroke-width="1.15"/>
<rect x="785" y="143.2" width="5" height="12.6" fill="#dadaf9"/>
<path d="M787.4,142.5 c2.8,1.2 2.8,5.8 0,7 c-2.8,1.2 -2.8,5.8 0,7" fill="none" stroke="#444" stroke-width="1.1"/>
<circle cx="787.4" cy="142.5" r="1.3" fill="#111"/>
<circle cx="787.4" cy="156.5" r="1.3" fill="#111"/>
<text x="788.6" y="116.8" font-size="7.3" text-anchor="middle" fill="#454550">HOT AT</text>
<text x="788.6" y="125.8" font-size="7.3" text-anchor="middle" fill="#454550">ALL TIMES</text>
<text x="792.7" y="151.2" font-size="7.3" fill="#454550">DEDICATED</text>
<text x="792.7" y="160.1" font-size="7.3" fill="#454550">FUSE 4</text>
<text x="792.7" y="166.9" font-size="7.3" fill="#454550">10A</text>
<text x="844.7" y="136.2" font-size="7.3" fill="#454550">ENGINE</text>
<text x="844.7" y="145.25" font-size="7.3" fill="#454550">COMPARTMENT</text>
<text x="844.7" y="154.3" font-size="7.3" fill="#454550">RELAY BOX</text>
<text x="844.7" y="163.35" font-size="7.3" fill="#454550">(LEFT SIDE OF</text>
<text x="844.7" y="172.4" font-size="7.3" fill="#454550">ENGINE COMPT)</text>
<text x="780" y="201.8" font-size="7.3" text-anchor="end" fill="#454550">ORG/BLK</text>
<text x="780" y="337.9" font-size="7.3" text-anchor="end" fill="#454550">ORG/BLK</text>
<rect x="774.8" y="217.4" width="24.4" height="27" fill="#dadaf9" stroke="#333" stroke-width="1.6" stroke-dasharray="7 4"/>
<line x1="787.4" y1="218" x2="787.4" y2="244" stroke="#555" stroke-width="1.0"/>
<polyline points="784.2,221.7 787.4,218.5 790.6,221.7" fill="none" stroke="#555" stroke-width="1.15"/>
<polyline points="784.2,240.3 787.4,243.5 790.6,240.3" fill="none" stroke="#555" stroke-width="1.15"/>
<circle cx="787.4" cy="230.7" r="1.0" fill="#111"/>
<path d="M783.4,214.6 C785.2,212.2 786.2,212 787.4,212 C788.6,212 789.6,212.2 791.4,214.6" fill="none" stroke="#444" stroke-width="1.1"/>
<path d="M783.4,246.4 C785.2,248.8 786.2,249 787.4,249 C788.6,249 789.6,248.8 791.4,246.4" fill="none" stroke="#444" stroke-width="1.1"/>
<text x="783" y="213.5" font-size="7.3" text-anchor="end" fill="#454550">6</text>
<text x="783" y="256.8" font-size="7.3" text-anchor="end" fill="#454550">9</text>
<text x="802" y="223" font-size="7.3" fill="#454550">J/C 2</text>
<text x="802" y="232.1" font-size="7.3" fill="#454550">(BEHIND</text>
<text x="802" y="241.2" font-size="7.3" fill="#454550">LEFT SIDE</text>
<text x="802" y="250.3" font-size="7.3" fill="#454550">OF DASH)</text>
<text x="752.8" y="271" font-size="7.3" text-anchor="end" fill="#454550">(ON</text>
<text x="752.8" y="279.6" font-size="7.3" text-anchor="end" fill="#454550">ENGINE)</text>
<text x="752.8" y="289.3" font-size="7.3" text-anchor="end" fill="#454550">G133</text>
<line x1="756.2" y1="285.2" x2="756.2" y2="287.8" stroke="#444" stroke-width="1.1"/>
<line x1="758.4" y1="282" x2="758.4" y2="290" stroke="#444" stroke-width="1.0"/>
<line x1="760.5" y1="281" x2="760.5" y2="291.6" stroke="#444" stroke-width="1.0"/>
<circle cx="762.8" cy="286.4" r="1.5" fill="#111"/>
<rect x="865.6" y="272.3" width="52.7" height="52.7" fill="#dadaf9" stroke="#707080" stroke-width="1.3"/>
<path d="M864,282.4 Q860.4,284.2 861,286.4 Q860.4,288.6 864,290.4" fill="none" stroke="#444" stroke-width="1.1"/>
<path d="M864,294.6 Q860.4,296.4 861,298.6 Q860.4,300.8 864,302.6" fill="none" stroke="#444" stroke-width="1.1"/>
<path d="M864,306.8 Q860.4,308.6 861,310.8 Q860.4,313 864,314.8" fill="none" stroke="#444" stroke-width="1.1"/>
<text x="845.4" y="284" font-size="7.3" text-anchor="end" fill="#454550">BLK</text>
<text x="858.3" y="284" font-size="7.3" text-anchor="end" fill="#454550">1</text>
<text x="846" y="296.2" font-size="7.3" text-anchor="end" fill="#454550">RED</text>
<text x="858.3" y="296.2" font-size="7.3" text-anchor="end" fill="#454550">3</text>
<text x="846" y="308.5" font-size="7.3" text-anchor="end" fill="#454550">GRN/RED</text>
<text x="858.3" y="308.5" font-size="7.3" text-anchor="end" fill="#454550">2</text>
<text x="916.5" y="336.2" font-size="7.3" text-anchor="end" fill="#454550">CRANKSHAFT</text>
<text x="919.3" y="344.9" font-size="7.3" text-anchor="end" fill="#454550">POSITION SENSOR</text>
<text x="917.5" y="353.6" font-size="7.3" text-anchor="end" fill="#454550">(ON LOWER FRONT</text>
<text x="917.5" y="362.3" font-size="7.3" text-anchor="end" fill="#454550">OF ENGINE, NEAR</text>
<text x="919.3" y="371" font-size="7.3" text-anchor="end" fill="#454550">CRANKSHAFT)</text>
<rect x="877.2" y="402.3" width="39.3" height="50.7" fill="#dadaf9" stroke="#707080" stroke-width="1.3"/>
<path d="M876,405.3 Q872.4,407.1 873,409.3 Q872.4,411.5 876,413.3" fill="none" stroke="#444" stroke-width="1.1"/>
<path d="M876,442.3 Q872.4,444.1 873,446.3 Q872.4,448.5 876,450.3" fill="none" stroke="#444" stroke-width="1.1"/>
<polyline points="877.8,409.3 898.2,409.3 898.2,417.2" fill="none" stroke="#555" stroke-width="1.0"/>
<path d="M898.2,417.2 a2.7,2.7 0 0 1 0,5.3 a2.7,2.7 0 0 1 0,5.3 a2.7,2.7 0 0 1 0,5.3 a2.7,2.7 0 0 1 0,5.3" fill="none" stroke="#555" stroke-width="1.0"/>
<polyline points="898.2,438.5 898.2,446.3 877.8,446.3" fill="none" stroke="#555" stroke-width="1.0"/>
<polyline points="881.2,406.1 878,409.3 881.2,412.5" fill="none" stroke="#555" stroke-width="1.15"/>
<polyline points="881.2,443.1 878,446.3 881.2,449.5" fill="none" stroke="#555" stroke-width="1.15"/>
<line x1="902.4" y1="417" x2="902.4" y2="437.4" stroke="#777" stroke-width="0.9"/>
<line x1="905.8" y1="417" x2="905.8" y2="437.4" stroke="#777" stroke-width="0.9"/>
<text x="857" y="406.7" font-size="7.3" text-anchor="end" fill="#454550">RED</text>
<text x="871" y="406.7" font-size="7.3" text-anchor="end" fill="#454550">2</text>
<text x="856.3" y="443.8" font-size="7.3" text-anchor="end" fill="#454550">YEL</text>
<text x="871" y="443.5" font-size="7.3" text-anchor="end" fill="#454550">1</text>
<text x="913.5" y="464" font-size="7.3" text-anchor="end" fill="#454550">EVAPORATIVE</text>
<text x="913.5" y="472.95" font-size="7.3" text-anchor="end" fill="#454550">EMISSION</text>
<text x="913.5" y="481.9" font-size="7.3" text-anchor="end" fill="#454550">VENTILATION</text>
<text x="915.6" y="490.85" font-size="7.3" text-anchor="end" fill="#454550">SOLENOID</text>
<text x="913.5" y="499.8" font-size="7.3" text-anchor="end" fill="#454550">(UNDER REAR</text>
<text x="913.5" y="508.75" font-size="7.3" text-anchor="end" fill="#454550">OF VEHICLE,</text>
<text x="915.6" y="517.7" font-size="7.3" text-anchor="end" fill="#454550">NEAR FUEL TANK)</text>
<path d="M746.3,459 L754.3,459 L750.3,466.3 Z" fill="#111"/>
<path d="M746.3,495.6 L754.3,495.6 L750.3,488.5 Z" fill="#111"/>
<text x="749.5" y="476.6" font-size="7.3" text-anchor="middle" fill="#454550">IMMOBILZER</text>
<text x="749.5" y="485.9" font-size="7.3" text-anchor="middle" fill="#454550">ECU</text>
<text transform="translate(747,426.6) rotate(-90)" font-size="7.3" text-anchor="end" fill="#454550">RED</text>
<text transform="translate(747.6,500.5) rotate(-90)" font-size="7.3" text-anchor="end" fill="#454550">WHT/GRN</text>
<path d="M664.4,713.7 L664.4,721 L657,717.3 Z" fill="#111"/>
<text x="632" y="708" font-size="7.3" text-anchor="middle" fill="#454550">STARTING/</text>
<text x="632" y="717" font-size="7.3" text-anchor="middle" fill="#454550">CHARGING</text>
<text x="653" y="726" font-size="7.3" text-anchor="end" fill="#454550">SYSTEM</text>
<rect x="865.8" y="531.2" width="52.3" height="320" fill="#dadaf9" stroke="#505050" stroke-width="1.6" stroke-dasharray="7.5 3.5"/>
<path d="M864,540.6 Q860.4,542.4 861,544.6 Q860.4,546.8 864,548.6" fill="none" stroke="#444" stroke-width="1.1"/>
<text x="858.3" y="542.8" font-size="7.3" text-anchor="end" fill="#454550">51</text>
<text x="843" y="542.8" font-size="7.3" text-anchor="end" fill="#454550">WHT/GRN</text>
<path d="M864,552.9 Q860.4,554.7 861,556.9 Q860.4,559.1 864,560.9" fill="none" stroke="#444" stroke-width="1.1"/>
<text x="858.3" y="555.1" font-size="7.3" text-anchor="end" fill="#454550">52</text>
<path d="M864,565.2 Q860.4,567 861,569.2 Q860.4,571.4 864,573.2" fill="none" stroke="#444" stroke-width="1.1"/>
<text x="858.3" y="567.4" font-size="7.3" text-anchor="end" fill="#454550">53</text>
<path d="M864,577.5 Q860.4,579.3 861,581.5 Q860.4,583.7 864,585.5" fill="none" stroke="#444" stroke-width="1.1"/>
<text x="858.3" y="579.7" font-size="7.3" text-anchor="end" fill="#454550">54</text>
<text x="843" y="579.7" font-size="7.3" text-anchor="end" fill="#454550">BLU/WHT</text>
<path d="M864,589.8 Q860.4,591.6 861,593.8 Q860.4,596 864,597.8" fill="none" stroke="#444" stroke-width="1.1"/>
<text x="858.3" y="592" font-size="7.3" text-anchor="end" fill="#454550">55</text>
<text x="843" y="592" font-size="7.3" text-anchor="end" fill="#454550">YEL</text>
<path d="M864,602.1 Q860.4,603.9 861,606.1 Q860.4,608.3 864,610.1" fill="none" stroke="#444" stroke-width="1.1"/>
<text x="858.3" y="604.3" font-size="7.3" text-anchor="end" fill="#454550">56</text>
<text x="843" y="604.3" font-size="7.3" text-anchor="end" fill="#454550">GRY/RED</text>
<path d="M864,614.4 Q860.4,616.2 861,618.4 Q860.4,620.6 864,622.4" fill="none" stroke="#444" stroke-width="1.1"/>
<text x="858.3" y="616.6" font-size="7.3" text-anchor="end" fill="#454550">57</text>
<path d="M864,626.7 Q860.4,628.5 861,630.7 Q860.4,632.9 864,634.7" fill="none" stroke="#444" stroke-width="1.1"/>
<text x="858.3" y="628.9" font-size="7.3" text-anchor="end" fill="#454550">58</text>
<text x="843" y="628.9" font-size="7.3" text-anchor="end" fill="#454550">WHT/RED</text>
<path d="M864,639 Q860.4,640.8 861,643 Q860.4,645.2 864,647" fill="none" stroke="#444" stroke-width="1.1"/>
<text x="858.3" y="641.2" font-size="7.3" text-anchor="end" fill="#454550">59</text>
<path d="M864,651.3 Q860.4,653.1 861,655.3 Q860.4,657.5 864,659.3" fill="none" stroke="#444" stroke-width="1.1"/>
<text x="858.3" y="653.5" font-size="7.3" text-anchor="end" fill="#454550">60</text>
<text x="843" y="653.5" font-size="7.3" text-anchor="end" fill="#454550">BRN/WHT</text>
<path d="M864,663.6 Q860.4,665.4 861,667.6 Q860.4,669.8 864,671.6" fill="none" stroke="#444" stroke-width="1.1"/>
<text x="858.3" y="665.8" font-size="7.3" text-anchor="end" fill="#454550">61</text>
<text x="843" y="665.8" font-size="7.3" text-anchor="end" fill="#454550">BRN/WHT</text>
<path d="M864,675.9 Q860.4,677.7 861,679.9 Q860.4,682.1 864,683.9" fill="none" stroke="#444" stroke-width="1.1"/>
<text x="858.3" y="678.1" font-size="7.3" text-anchor="end" fill="#454550">62</text>
<text x="843" y="678.1" font-size="7.3" text-anchor="end" fill="#454550">RED/WHT</text>
<text x="858.3" y="690.5" font-size="7.3" text-anchor="end" fill="#454550">C56</text>
<line x1="845" y1="691.7" x2="858.3" y2="691.7" stroke="#666" stroke-width="0.7"/>
<path d="M864,713.3 Q860.4,715.1 861,717.3 Q860.4,719.5 864,721.3" fill="none" stroke="#444" stroke-width="1.1"/>
<text x="858.3" y="715.5" font-size="7.3" text-anchor="end" fill="#454550">71</text>
<text x="843" y="713.8" font-size="7.3" text-anchor="end" fill="#454550">BLK/RED</text>
<path d="M864,725.61 Q860.4,727.41 861,729.61 Q860.4,731.81 864,733.61" fill="none" stroke="#444" stroke-width="1.1"/>
<text x="858.3" y="727.81" font-size="7.3" text-anchor="end" fill="#454550">72</text>
<text x="843" y="727.81" font-size="7.3" text-anchor="end" fill="#454550">RED/BLU</text>
<path d="M864,737.92 Q860.4,739.72 861,741.92 Q860.4,744.12 864,745.92" fill="none" stroke="#444" stroke-width="1.1"/>
<text x="858.3" y="740.12" font-size="7.3" text-anchor="end" fill="#454550">73</text>
<text x="843" y="740.12" font-size="7.3" text-anchor="end" fill="#454550">BLU/RED</text>
<path d="M864,750.23 Q860.4,752.03 861,754.23 Q860.4,756.43 864,758.23" fill="none" stroke="#444" stroke-width="1.1"/>
<text x="858.3" y="752.43" font-size="7.3" text-anchor="end" fill="#454550">74</text>
<path d="M864,762.54 Q860.4,764.34 861,766.54 Q860.4,768.74 864,770.54" fill="none" stroke="#444" stroke-width="1.1"/>
<text x="858.3" y="764.74" font-size="7.3" text-anchor="end" fill="#454550">75</text>
<text x="843" y="764.74" font-size="7.3" text-anchor="end" fill="#454550">GRN</text>
<path d="M864,774.85 Q860.4,776.65 861,778.85 Q860.4,781.05 864,782.85" fill="none" stroke="#444" stroke-width="1.1"/>
<text x="858.3" y="777.05" font-size="7.3" text-anchor="end" fill="#454550">76</text>
<text x="843" y="777.05" font-size="7.3" text-anchor="end" fill="#454550">WHT</text>
<path d="M864,787.16 Q860.4,788.96 861,791.16 Q860.4,793.36 864,795.16" fill="none" stroke="#444" stroke-width="1.1"/>
<text x="858.3" y="789.36" font-size="7.3" text-anchor="end" fill="#454550">77</text>
<path d="M864,799.47 Q860.4,801.27 861,803.47 Q860.4,805.67 864,807.47" fill="none" stroke="#444" stroke-width="1.1"/>
<text x="858.3" y="801.67" font-size="7.3" text-anchor="end" fill="#454550">78</text>
<text x="843" y="801.67" font-size="7.3" text-anchor="end" fill="#454550">WHT</text>
<path d="M864,811.78 Q860.4,813.58 861,815.78 Q860.4,817.98 864,819.78" fill="none" stroke="#444" stroke-width="1.1"/>
<text x="858.3" y="813.98" font-size="7.3" text-anchor="end" fill="#454550">79</text>
<text x="843" y="813.98" font-size="7.3" text-anchor="end" fill="#454550">WHT/VIO</text>
<path d="M864,824.09 Q860.4,825.89 861,828.09 Q860.4,830.29 864,832.09" fill="none" stroke="#444" stroke-width="1.1"/>
<text x="858.3" y="826.29" font-size="7.3" text-anchor="end" fill="#454550">80</text>
<text x="843" y="826.29" font-size="7.3" text-anchor="end" fill="#454550">ORG/BLK</text>
<path d="M864,836.4 Q860.4,838.2 861,840.4 Q860.4,842.6 864,844.4" fill="none" stroke="#444" stroke-width="1.1"/>
<text x="858.3" y="838.6" font-size="7.3" text-anchor="end" fill="#454550">81</text>
<text x="843" y="838.6" font-size="7.3" text-anchor="end" fill="#454550">GRN/YEL</text>
<text x="50.5" y="461.75" font-size="7.3" text-anchor="middle" fill="#454550">1</text>
<text x="60.7" y="456.25" font-size="7.3" fill="#454550">RED</text>
<text x="50.5" y="547.9" font-size="7.3" text-anchor="middle" fill="#454550">2</text>
<text x="60.7" y="542.4" font-size="7.3" fill="#454550">GRN/BLU</text>
<text x="50.5" y="584.8" font-size="7.3" text-anchor="middle" fill="#454550">3</text>
<text x="60.7" y="579.3" font-size="7.3" fill="#454550">BLK</text>
<text x="50.5" y="634.6" font-size="7.3" text-anchor="middle" fill="#454550">4</text>
<text x="60.7" y="629.1" font-size="7.3" fill="#454550">WHT/RED</text>
<text x="50.5" y="695.4" font-size="7.3" text-anchor="middle" fill="#454550">5</text>
<text x="60.7" y="689.9" font-size="7.3" fill="#454550">RED/YEL</text>
<text x="50.5" y="757.3" font-size="7.3" text-anchor="middle" fill="#454550">6</text>
<text x="60.7" y="751.8" font-size="7.3" fill="#454550">BLK/WHT</text>
<text x="50.5" y="806.6" font-size="7.3" text-anchor="middle" fill="#454550">7</text>
<text x="60.7" y="801.1" font-size="7.3" fill="#454550">WHT</text>
<text x="171.5" y="456.3" font-size="7.3" fill="#454550">RED</text>
<text x="159" y="751.8" font-size="7.3" fill="#454550">BLK/WHT</text>
<text transform="translate(118.7,466.5) rotate(-90)" font-size="7.3" text-anchor="end" fill="#454550">RED</text>
<text x="281" y="837.8" font-size="7.3" fill="#454550">GRN/YEL</text>
<text x="503" y="837.8" font-size="7.3" fill="#454550">GRN/YEL</text>
<text x="614" y="837.8" font-size="7.3" fill="#454550">GRN/YEL</text>
<text x="841.6" y="296.2" font-size="7.3" fill="#454550"></text>
<text x="857" y="296.2" font-size="7.3" fill="#454550"></text>
<circle cx="146.6" cy="261.8" r="5.5" fill="#fff"/>
<circle cx="146.6" cy="261.8" r="1.9" fill="#111"/>
<circle cx="146.6" cy="348" r="5.5" fill="#fff"/>
<circle cx="146.6" cy="348" r="1.9" fill="#111"/>
<circle cx="122.2" cy="458.75" r="5.5" fill="#fff"/>
<circle cx="122.2" cy="458.75" r="1.9" fill="#111"/>
<circle cx="146.6" cy="754.3" r="5.5" fill="#fff"/>
<circle cx="146.6" cy="754.3" r="1.9" fill="#111"/>
<circle cx="331.7" cy="261.5" r="5.5" fill="#fff"/>
<circle cx="331.7" cy="261.5" r="1.9" fill="#111"/>
<circle cx="566" cy="299" r="5.5" fill="#fff"/>
<circle cx="566" cy="299" r="1.9" fill="#111"/>
<circle cx="688.8" cy="298.6" r="5.5" fill="#fff"/>
<circle cx="688.8" cy="298.6" r="1.9" fill="#111"/>
<circle cx="566" cy="409.7" r="5.5" fill="#fff"/>
<circle cx="566" cy="409.7" r="1.9" fill="#111"/>
<circle cx="750.3" cy="409.8" r="5.5" fill="#fff"/>
<circle cx="750.3" cy="409.8" r="1.9" fill="#111"/>
<circle cx="245.6" cy="840.3" r="5.5" fill="#fff"/>
<circle cx="245.6" cy="840.3" r="1.9" fill="#111"/>
<circle cx="553.5" cy="840.3" r="5.5" fill="#fff"/>
<circle cx="553.5" cy="840.3" r="1.9" fill="#111"/>
<circle cx="676.9" cy="840.3" r="5.5" fill="#fff"/>
<circle cx="676.9" cy="840.3" r="1.9" fill="#111"/>
</g>
</svg>
</body></html>
